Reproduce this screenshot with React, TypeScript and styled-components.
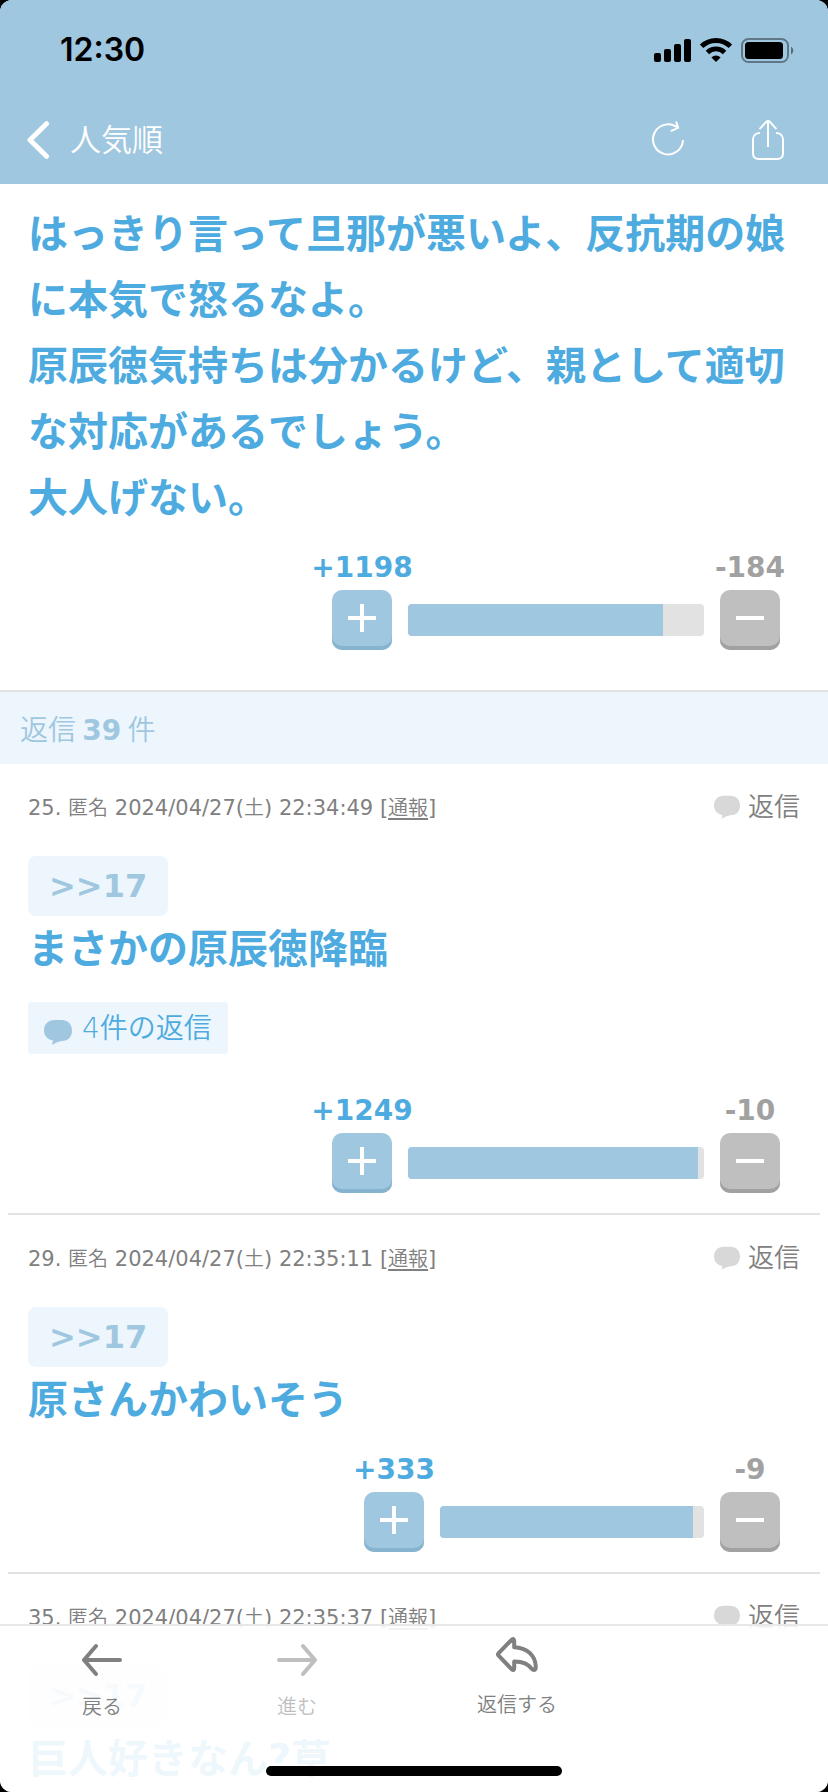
import React from "react";
import styled, { createGlobalStyle } from "styled-components";

const latin = `"DejaVu Sans", "Noto Sans CJK JP", sans-serif`;
const japanese = `"Noto Sans CJK JP", "DejaVu Sans", sans-serif`;

const color = {
  bar: "#9fc7e0",
  barShade: "#86b3cd",
  link: "#4dabdf",
  pale: "#edf6fd",
  text: "#808080",
  muted: "#bfbfbf",
  mutedShade: "#a1a1a1",
  line: "#e2e2e2",
  bubble: "#d8d8d8",
};

const GlobalStyle = createGlobalStyle`
  *, *::before, *::after { box-sizing: border-box; }
  body { margin: 0; background: #000; }
  button { border: 0; margin: 0; padding: 0; background: none; font: inherit; color: inherit; cursor: pointer; }
  p { margin: 0; }
  svg { display: block; flex: none; }
`;

const Screen = styled.div`
  position: relative;
  display: flex;
  flex-direction: column;
  height: 100vh;
  overflow: hidden;
  border-radius: 12px;
  background: #fff;
  color: ${color.text};
  font-family: ${latin};
`;

const Header = styled.header`
  flex: none;
  background: ${color.bar};
`;

const StatusBar = styled.div`
  display: flex;
  align-items: center;
  justify-content: space-between;
  height: 96px;
  padding: 4px 34px 0 60px;
  color: #000;
  font: 600 32px/40px Inter, sans-serif;
`;

const StatusIcons = styled.div`
  display: flex;
  align-items: center;
  gap: 9px;
`;

const NavBar = styled.nav`
  display: flex;
  align-items: center;
  justify-content: space-between;
  height: 88px;
  padding: 0 44px 0 26px;
  color: #fff;
`;

const BackButton = styled.button`
  display: flex;
  align-items: center;
  gap: 20px;
  font: 350 31px/44px ${latin};
`;

const NavActions = styled.div`
  display: flex;
  align-items: center;
  gap: 68px;
`;

const Content = styled.main`
  flex: 1;
  min-height: 0;
  overflow-y: auto;
  scrollbar-width: none;
`;

const LeadPost = styled.article`
  padding: 17px 28px 40px;
  border-bottom: 2px solid ${color.line};
`;

const PostText = styled.p`
  color: ${color.link};
  font-size: 40px;
  font-weight: 700;
  line-height: 66px;
`;

const RepliesTitle = styled.h2`
  height: 72px;
  margin: 0;
  padding: 0 20px;
  background: ${color.pale};
  color: ${color.bar};
  font: 350 28px/72px ${japanese};

  strong {
    font-family: ${latin};
    font-weight: 700;
  }
`;

const Comment = styled.article`
  margin: 0 8px;
  padding: 27px 20px 20px;
  border-bottom: 2px solid ${color.line};

  &:last-child {
    padding-bottom: 0;
    border-bottom: 0;
  }
`;

const MetaRow = styled.header`
  display: flex;
  align-items: center;
  justify-content: space-between;
  height: 32px;
  margin-bottom: 33px;
  font-size: 21px;
  line-height: 32px;
`;

const Kanji = styled.span`
  font-family: ${japanese};
  font-size: 20px;
  font-weight: 350;
`;

const ReportLink = styled.a`
  color: inherit;
  font-family: ${japanese};
  font-size: 20px;
  font-weight: 350;
  text-decoration: underline;
  text-decoration-thickness: 2px;
  text-underline-offset: 3px;
`;

const ReplyButton = styled.button`
  display: flex;
  align-items: center;
  gap: 8px;
  font: 350 26px/32px ${latin};
`;

const QuoteBadge = styled.a`
  display: block;
  width: fit-content;
  height: 60px;
  padding: 0 21px;
  border-radius: 8px;
  background: ${color.pale};
  color: ${color.bar};
  font-size: 32px;
  font-weight: 700;
  line-height: 60px;
  text-decoration: none;
`;

const RepliesChip = styled.button`
  display: flex;
  align-items: flex-end;
  gap: 10px;
  height: 52px;
  margin: 20px 0;
  padding: 0 16px 8px;
  border-radius: 4px;
  background: ${color.pale};
  color: ${color.link};
  font-size: 28px;
  font-weight: 350;
  line-height: 34px;
`;

const VoteRow = styled.div`
  display: flex;
  align-items: flex-end;
  justify-content: flex-end;
  gap: 16px;
  padding: 15px 20px 0 0;
`;

const VoteSide = styled.div`
  display: flex;
  flex-direction: column;
  align-items: center;
  width: 60px;
`;

const VoteCount = styled.span<{ $color: string }>`
  color: ${(p) => p.$color};
  font-size: 28px;
  font-weight: 700;
  line-height: 44px;
  white-space: nowrap;
`;

const VoteButton = styled.button<{ $face: string; $shade: string }>`
  display: grid;
  place-items: center;
  width: 60px;
  height: 60px;
  padding-bottom: 4px;
  border-radius: 10px;
  background: ${(p) => p.$face};
  box-shadow: inset 0 -4px ${(p) => p.$shade};
`;

const VoteTrack = styled.div<{ $width: number }>`
  width: ${(p) => p.$width}px;
  height: 32px;
  margin-bottom: 14px;
  overflow: hidden;
  border-radius: 4px;
  background: ${color.line};
`;

const VoteFill = styled.div`
  height: 100%;
  background: ${color.bar};
`;

const TabBar = styled.footer`
  position: absolute;
  right: 0;
  bottom: 0;
  left: 0;
  display: grid;
  grid-template-columns: 204fr 186fr 254fr 184fr;
  align-items: start;
  height: 168px;
  border-top: 2px solid rgba(226, 226, 226, 0.8);
  background: rgba(255, 255, 255, 0.9);
`;

const TabButton = styled.button`
  display: flex;
  flex-direction: column;
  align-items: center;
  gap: 13px;
  padding-top: 16px;
  font: 350 20px/32px ${latin};
  color: ${color.text};

  &:disabled {
    color: ${color.muted};
    cursor: default;
  }
`;

const ReplyTab = styled(TabButton)`
  gap: 16px;
  padding-top: 11px;
`;

const HomeIndicator = styled.div`
  position: absolute;
  bottom: 16px;
  left: 50%;
  width: 296px;
  height: 10px;
  border-radius: 5px;
  background: #000;
  transform: translateX(-50%);
`;

const SignalIcon = () => (
  <svg width="37" height="23" viewBox="0 0 37 23" fill="#000">
    <rect x="0" y="14" width="7" height="9" rx="2" />
    <rect x="10" y="10" width="7" height="13" rx="2" />
    <rect x="20" y="5" width="7" height="18" rx="2" />
    <rect x="30" y="0" width="7" height="23" rx="2" />
  </svg>
);

const WifiIcon = () => (
  <svg width="32" height="24" viewBox="1 0 32 24">
    <g fill="none" stroke="#000" strokeWidth="4.8">
      <path d="M2.6 8.4 A20.5 20.5 0 0 1 31.4 8.4" />
      <path d="M8.4 14.4 A12.4 12.4 0 0 1 25.6 14.4" />
    </g>
    <path d="M17 24 L12.4 19.4 A6.6 6.6 0 0 1 21.6 19.4 Z" fill="#000" />
  </svg>
);

const BatteryIcon = () => (
  <svg width="53" height="25" viewBox="0 0 53 25">
    <rect x="1" y="1" width="46" height="23" rx="6.5" fill="none" stroke="#000" strokeOpacity="0.4" strokeWidth="2" />
    <rect x="4" y="4" width="38" height="17" rx="3.5" fill="#000" />
    <path d="M50 8.5 A4.6 4.6 0 0 1 50 16.5 Z" fill="#000" fillOpacity="0.45" />
  </svg>
);

const ChevronIcon = () => (
  <svg width="24" height="40" viewBox="0 0 24 40" fill="none" stroke="#fff" strokeWidth="5" strokeLinecap="round" strokeLinejoin="round">
    <path d="M20.5 3.7 L4 20 L20.5 36.3" />
  </svg>
);

const RefreshIcon = () => (
  <svg width="32" height="40" viewBox="0 0 32 40" fill="none" stroke="#fff" strokeWidth="2">
    <path d="M31 20 A15 15 0 1 1 26 8.2" />
    <path d="M24 1.5 L26.2 7.8 L18.8 11.2" />
  </svg>
);

const ShareIcon = () => (
  <svg width="32" height="42" viewBox="0 0 32 42" fill="none" stroke="#fff" strokeWidth="2">
    <path d="M8 14 C4 14 1 16.5 1 20.5 V34.5 C1 38 3.5 40 7 40 H25 C28.5 40 31 38 31 34.5 V20.5 C31 16.5 28 14 24 14" />
    <path d="M16 28 V1.5 M7.5 10.2 L14.6 2.4 Q16 1 17.4 2.4 L24.5 10.2" />
  </svg>
);

const BubbleIcon = ({ size, fill }: { size: number; fill: string }) => (
  <svg width={size} height={size} viewBox="0 0 28 28" fill={fill}>
    <path d="M10.5 2 H17.5 C24 2 28 6.5 28 12.5 C28 18.5 24.5 23 18 23 C14.5 23.6 12 24.6 8 27 L9 22.6 C3.2 21.6 0 17.6 0 12.5 C0 6.5 4 2 10.5 2 Z" />
  </svg>
);

const PlusIcon = () => (
  <svg width="28" height="28" viewBox="0 0 28 28" stroke="#fff" strokeWidth="4">
    <path d="M0 14 H28 M14 0 V28" />
  </svg>
);

const MinusIcon = () => (
  <svg width="28" height="28" viewBox="0 0 28 28" stroke="#fff" strokeWidth="4">
    <path d="M0 14 H28" />
  </svg>
);

const ArrowIcon = ({ forward }: { forward?: boolean }) => (
  <svg width="40" height="36" viewBox="0 0 40 36" fill="none" stroke="currentColor" strokeWidth="4" strokeLinecap="round" strokeLinejoin="round">
    <path d={forward ? "M2 18 H38 M26 4 L38 18 L26 32" : "M38 18 H2 M14 4 L2 18 L14 32"} />
  </svg>
);

const ReplyArrowIcon = () => (
  <svg width="42" height="36" viewBox="0 0 42 36" fill="none" stroke="currentColor" strokeWidth="4" strokeLinecap="round" strokeLinejoin="round">
    <path d="M16 2.4 L2.4 16.4 Q1.6 17.4 2.4 18.4 L16 32.6 Q18.2 34 18.2 31 V24.6 C27 24.4 32 26.8 36 32 Q39.8 34.6 39.8 30 C39.6 18 30.5 10.6 18.2 10.2 V4.6 Q18.2 1.2 16 2.4 Z" />
  </svg>
);

interface VoteProps {
  plus: number;
  minus: number;
  width: number;
  share: number;
}

const Votes = ({ plus, minus, width, share }: VoteProps) => (
  <VoteRow>
    <VoteSide>
      <VoteCount $color={color.link}>+{plus}</VoteCount>
      <VoteButton $face={color.bar} $shade={color.barShade} aria-label="プラス">
        <PlusIcon />
      </VoteButton>
    </VoteSide>
    <VoteTrack $width={width}>
      <VoteFill style={{ width: `${share}%` }} />
    </VoteTrack>
    <VoteSide>
      <VoteCount $color={color.mutedShade}>-{minus}</VoteCount>
      <VoteButton $face={color.muted} $shade={color.mutedShade} aria-label="マイナス">
        <MinusIcon />
      </VoteButton>
    </VoteSide>
  </VoteRow>
);

interface CommentData {
  id: number;
  time: string;
  text: string;
  replies?: number;
  votes?: VoteProps;
}

const comments: CommentData[] = [
  {
    id: 25,
    time: "22:34:49",
    text: "まさかの原辰徳降臨",
    replies: 4,
    votes: { plus: 1249, minus: 10, width: 296, share: 98 },
  },
  {
    id: 29,
    time: "22:35:11",
    text: "原さんかわいそう",
    votes: { plus: 333, minus: 9, width: 264, share: 96 },
  },
  { id: 35, time: "22:35:37", text: "巨人好きなん?草" },
];

export default function App() {
  return (
    <Screen lang="ja">
      <GlobalStyle />
      <Header>
        <StatusBar>
          <span>12:30</span>
          <StatusIcons>
            <SignalIcon />
            <WifiIcon />
            <BatteryIcon />
          </StatusIcons>
        </StatusBar>
        <NavBar>
          <BackButton>
            <ChevronIcon />
            人気順
          </BackButton>
          <NavActions>
            <button aria-label="更新">
              <RefreshIcon />
            </button>
            <button aria-label="共有">
              <ShareIcon />
            </button>
          </NavActions>
        </NavBar>
      </Header>

      <Content>
        <LeadPost>
          <PostText>
            はっきり言って旦那が悪いよ、反抗期の娘に本気で怒るなよ。
            <br />
            原辰徳気持ちは分かるけど、親として適切な対応があるでしょう。
            <br />
            大人げない。
          </PostText>
          <Votes plus={1198} minus={184} width={296} share={86} />
        </LeadPost>

        <RepliesTitle>
          返信 <strong>39</strong> 件
        </RepliesTitle>

        {comments.map((c) => (
          <Comment key={c.id}>
            <MetaRow>
              <span>
                {c.id}. <Kanji>匿名</Kanji> 2024/04/27(<Kanji>土</Kanji>) {c.time} [
                <ReportLink href="#report">通報</ReportLink>]
              </span>
              <ReplyButton>
                <BubbleIcon size={26} fill={color.bubble} />
                返信
              </ReplyButton>
            </MetaRow>
            <QuoteBadge href="#17">&gt;&gt;17</QuoteBadge>
            <PostText>{c.text}</PostText>
            {c.replies && (
              <RepliesChip>
                <BubbleIcon size={28} fill={color.bar} />
                {c.replies}件の返信
              </RepliesChip>
            )}
            {c.votes && <Votes {...c.votes} />}
          </Comment>
        ))}
      </Content>

      <TabBar>
        <TabButton>
          <ArrowIcon />
          戻る
        </TabButton>
        <TabButton disabled>
          <ArrowIcon forward />
          進む
        </TabButton>
        <ReplyTab>
          <ReplyArrowIcon />
          返信する
        </ReplyTab>
        <HomeIndicator />
      </TabBar>
    </Screen>
  );
}
